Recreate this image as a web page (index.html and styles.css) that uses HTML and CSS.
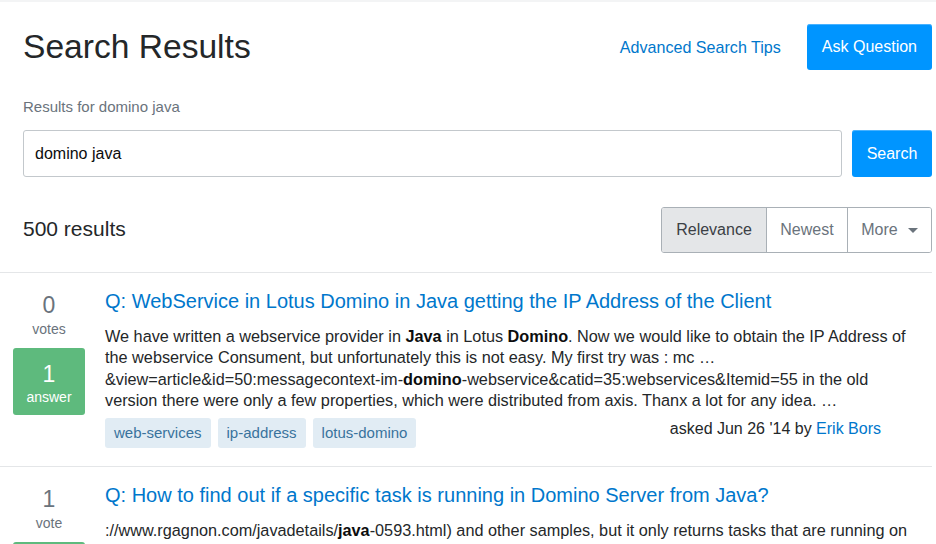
FILE: index.html
```html
<!DOCTYPE html>
<html lang="en">
<head>
<meta charset="utf-8">
<title>Search Results</title>
<link rel="stylesheet" href="styles.css">
</head>
<body>
<div class="page">
  <div class="header">
    <div class="title-row">
      <h1 class="title">Search Results</h1>
      <a class="tips" href="#">Advanced Search Tips</a>
      <a class="btn btn-primary ask" href="#">Ask Question</a>
    </div>
    <div class="results-for">Results for domino java</div>
    <form class="search-row">
      <input class="search-input" type="text" value="domino java">
      <button class="btn btn-primary search-btn" type="button">Search</button>
    </form>
    <div class="sort-row">
      <div class="count">500 results</div>
      <div class="btn-group">
        <span class="seg active">Relevance</span>
        <span class="seg">Newest</span>
        <span class="seg more">More <span class="caret"></span></span>
      </div>
    </div>
  </div>

  <div class="results">
    <div class="result">
      <div class="stats">
        <div class="votes-num">0</div>
        <div class="votes-label">votes</div>
        <div class="answers">
          <div class="answers-num">1</div>
          <div class="answers-label">answer</div>
        </div>
      </div>
      <div class="summary">
        <a class="q-title" href="#">Q: WebService in Lotus Domino in Java getting the IP Address of the Client</a>
        <div class="excerpt">We have written a webservice provider in <b>Java</b> in Lotus <b>Domino</b>. Now we would like to obtain the IP Address of the webservice Consument, but unfortunately this is not easy. My first try was : mc &hellip; &amp;view=article&amp;id=50:messagecontext-im-<b>domino</b>-webservice&amp;catid=35:webservices&amp;Itemid=55 in the old version there were only a few properties, which were distributed from axis. Thanx a lot for any idea. &hellip;</div>
        <div class="foot">
          <div class="tags">
            <a class="tag" href="#">web-services</a>
            <a class="tag" href="#">ip-address</a>
            <a class="tag" href="#">lotus-domino</a>
          </div>
          <div class="meta">asked Jun 26 '14 by <a href="#">Erik Bors</a></div>
        </div>
      </div>
    </div>

    <div class="result">
      <div class="stats">
        <div class="votes-num">1</div>
        <div class="votes-label">vote</div>
        <div class="answers">
          <div class="answers-num">1</div>
          <div class="answers-label">answer</div>
        </div>
      </div>
      <div class="summary">
        <a class="q-title" href="#">Q: How to find out if a specific task is running in Domino Server from Java?</a>
        <div class="excerpt">://www.rgagnon.com/javadetails/<b>java</b>-0593.html) and other samples, but it only returns tasks that are running on the same server that is tied to the <b>Domino</b> session from <b>Java</b>. I would like to check the other servers in the domain as well. &hellip;</div>
      </div>
    </div>
  </div>
</div>
</body>
</html>
```

FILE: styles.css
```css
* { box-sizing: border-box; }

html, body {
  margin: 0;
  padding: 0;
  background: #fff;
}

body {
  font-family: "Liberation Sans", Arial, sans-serif;
  color: #242729;
  border-top: 2px solid #f3f4f5;
}

a { text-decoration: none; color: #0077cc; }

.page {
  width: 932px;
}

.header {
  padding: 22px 0 0 23px;
}

.title-row {
  display: flex;
  align-items: center;
  height: 46px;
}

.title {
  margin: 0;
  font-size: 33.6px;
  font-weight: 400;
  line-height: 46px;
  color: #242729;
  flex: 1;
}

.tips {
  font-size: 16.1px;
  margin-right: 26px;
}

.btn {
  display: inline-flex;
  align-items: center;
  justify-content: center;
  font-family: "Liberation Sans", Arial, sans-serif;
  font-size: 16px;
  padding: 0 15px;
  border-radius: 3px;
  border: none;
}

.btn-primary {
  background: #0095ff;
  color: #fff;
  box-shadow: inset 0 1px 0 rgba(102, 191, 255, 0.7);
}

.ask {
  height: 46px;
}

.results-for {
  margin-top: 27px;
  font-size: 15px;
  line-height: 20px;
  color: #6a737c;
}

.search-row {
  display: flex;
  gap: 10px;
  margin: 13px 0 0 0;
}

.search-input {
  flex: 1;
  height: 47px;
  border: 1px solid #c3c8cc;
  border-radius: 3px;
  padding: 0 11px;
  font-family: "Liberation Sans", Arial, sans-serif;
  font-size: 16px;
  color: #0c0d0e;
}

.search-btn {
  height: 47px;
  width: 80px;
  padding: 0;
}

.sort-row {
  display: flex;
  align-items: center;
  justify-content: space-between;
  margin-top: 30px;
}

.count {
  font-size: 21px;
  color: #242729;
  margin-top: -2px;
}

.btn-group {
  display: flex;
  height: 46px;
  border: 1px solid #a9b0b6;
  border-radius: 3px;
  overflow: hidden;
}

.seg {
  display: flex;
  align-items: center;
  justify-content: center;
  font-size: 16px;
  color: #6a737c;
  background: #fff;
  border-left: 1px solid #a9b0b6;
}

.seg:nth-child(1) { width: 104px; border-left: none; }
.seg:nth-child(2) { width: 81px; }
.seg:nth-child(3) { width: 84px; }

.seg.active {
  background: #e4e6e8;
  color: #3b4045;
}

.caret {
  display: inline-block;
  width: 0;
  height: 0;
  margin-left: 10px;
  border-left: 5px solid transparent;
  border-right: 5px solid transparent;
  border-top: 5px solid #6a737c;
}

.results {
  margin-top: 19px;
  border-top: 1px solid #e4e6e8;
}

.result {
  display: flex;
  padding: 15px 0 18px 13px;
  border-bottom: 1px solid #e4e6e8;
}

.stats {
  width: 72px;
  flex: none;
  display: flex;
  flex-direction: column;
  align-items: center;
  color: #6a737c;
  margin-right: 20px;
}

.votes-num {
  font-size: 23px;
  line-height: 28px;
  margin-top: 3px;
}

.votes-label {
  font-size: 14px;
  line-height: 18px;
  margin-top: 1px;
}

.answers {
  margin-top: 10px;
  width: 72px;
  height: 67px;
  padding-top: 12px;
  background: #5eba7d;
  border-radius: 3px;
  color: #fff;
  display: flex;
  flex-direction: column;
  align-items: center;
}

.answers-num {
  font-size: 23px;
  line-height: 28px;
}

.answers-label {
  font-size: 14px;
  line-height: 18px;
}

.summary {
  flex: 1;
  min-width: 0;
}

.q-title {
  display: block;
  font-size: 20px;
  line-height: 26px;
  color: #0077cc;
}

.excerpt {
  margin-top: 12px;
  font-size: 16.25px;
  line-height: 21.33px;
  color: #242729;
  padding-right: 24px;
}

.excerpt b {
  color: #0c0d0e;
}

.foot {
  display: flex;
  align-items: center;
  justify-content: space-between;
  margin-top: 7px;
}

.tags {
  display: flex;
  gap: 7px;
}

.tag {
  display: inline-block;
  font-size: 15px;
  line-height: 30px;
  padding: 0 9px;
  background: #e1ecf4;
  color: #39739d;
  border-radius: 3px;
}

.meta {
  font-size: 16px;
  color: #242729;
  margin-right: 51px;
  margin-top: -9px;
}

.meta a { color: #0077cc; }
```
